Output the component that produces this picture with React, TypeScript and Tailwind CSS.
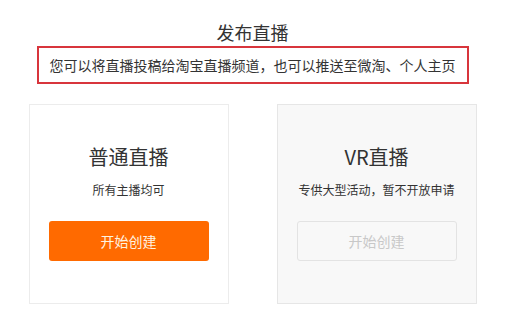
import React from 'react';

type CardProps = {
  title: string;
  desc: string;
  disabled?: boolean;
};

const LiveCard: React.FC<CardProps> = ({ title, desc, disabled }) => {
  return (
    <div
      className={
        'w-[200px] h-[200px] border flex flex-col items-center pt-[38px] ' +
        (disabled ? 'bg-[#f8f8f8] border-[#e6e6e6]' : 'bg-white border-[#ececec]')
      }
    >
      <div className="text-[20px] leading-[28px] text-[#333]">{title}</div>
      <div className="mt-[10px] text-[12px] leading-[18px] text-[#333]">{desc}</div>
      {disabled ? (
        <button className="mt-[22px] w-[160px] h-[40px] rounded-[3px] border border-[#e3e3e3] bg-[#f8f8f8] text-[14px] text-[#c8c8c8]">
          开始创建
        </button>
      ) : (
        <button className="mt-[22px] w-[160px] h-[40px] rounded-[3px] bg-[#ff6a00] text-[14px] text-[#fff3e0]">
          开始创建
        </button>
      )}
    </div>
  );
};

const App: React.FC = () => {
  return (
    <div
      className="w-[509px] h-[330px] bg-white flex flex-col items-center pt-[20px] pr-[4px]"
      style={{ fontFamily: '"Noto Sans CJK SC", "Noto Sans", sans-serif' }}
    >
      {/* 标题 */}
      <h1 className="text-[18px] leading-[24px] text-[#333] font-normal">发布直播</h1>

      {/* 提示框 */}
      <div className="mt-[2px] w-[432px] h-[38px] border-2 border-[#d8353c] flex items-center justify-center text-[14px] text-[#333]">
        您可以将直播投稿给淘宝直播频道，也可以推送至微淘、个人主页
      </div>

      {/* 直播类型 */}
      <div className="mt-[20px] flex gap-[48px]">
        <LiveCard title="普通直播" desc="所有主播均可" />
        <LiveCard title="VR直播" desc="专供大型活动，暂不开放申请" disabled />
      </div>
    </div>
  );
};

export default App;
